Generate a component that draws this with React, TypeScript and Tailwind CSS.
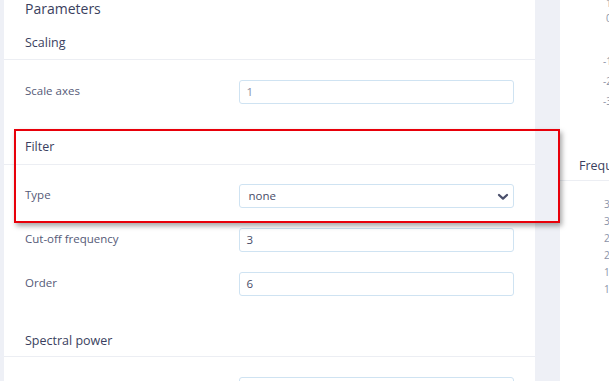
import React from "react";

const font = { fontFamily: '"Open Sans", "Noto Sans", "Liberation Sans", sans-serif' };

interface FieldProps {
  label: string;
  value: string;
  muted?: boolean;
}

// 一行：标签 + 输入框
function Field({ label, value, muted }: FieldProps) {
  return (
    <div className="flex items-start">
      <div className="w-[214px] pt-[3px] text-[11.5px] leading-[16px] text-[#555a77]">{label}</div>
      <div
        className={`flex h-[24px] w-[276px] items-center rounded-[3px] border border-[#cfe3f2] bg-white pl-[7px] text-[11.5px] ${
          muted ? "text-[#8a8ea2]" : "text-[#484c68]"
        }`}
      >
        {value}
      </div>
    </div>
  );
}

function SelectField({ label, value }: { label: string; value: string }) {
  return (
    <div className="flex items-start">
      <div className="w-[214px] pt-[3px] text-[11.5px] leading-[16px] text-[#555a77]">{label}</div>
      <div className="flex h-[24px] w-[276px] items-center justify-between rounded-[3px] border border-[#cfe3f2] bg-white pl-[9px] pr-[4px] text-[11.5px] text-[#484c68]">
        <span>{value}</span>
        <svg width="12" height="8" viewBox="0 0 12 8" className="mt-px">
          <polyline points="2,2 6,5.6 10,2" fill="none" stroke="#4a4f6b" strokeWidth="2.3" strokeLinecap="round" strokeLinejoin="round" />
        </svg>
      </div>
    </div>
  );
}

// 分组标题，底部带分隔线
function SectionHeader({ title, className }: { title: string; className: string }) {
  return (
    <div className={`flex items-end border-b border-[#eceef3] px-[21px] ${className}`}>
      <span className="text-[12.5px] font-medium leading-[16px] text-[#3b3f60]">{title}</span>
    </div>
  );
}

export default function App() {
  const yValues = ["3", "3", "2", "2", "1", "1"];

  return (
    <div className="relative flex h-[381px] w-[609px] overflow-hidden bg-[#eef0f6] pl-[4px]" style={font}>
      {/* 参数面板 */}
      <div className="w-[531px] shrink-0 bg-white">
        <div className="h-[19px] px-[21px] text-[14px] leading-[18px] text-[#3b3f5e]">Parameters</div>

        <SectionHeader title="Scaling" className="h-[41px] pb-[8px]" />
        <div className="px-[21px] pt-[20px]">
          <Field label="Scale axes" value="1" muted />
        </div>

        <SectionHeader title="Filter" className="h-[61px] pb-[9px]" />
        <div className="flex flex-col gap-[20px] px-[21px] pt-[19px]">
          <SelectField label="Type" value="none" />
          <Field label="Cut-off frequency" value="3" />
          <Field label="Order" value="6" />
        </div>

        <SectionHeader title="Spectral power" className="h-[61px] pb-[7px]" />
        <div className="px-[21px] pt-[20px]">
          <Field label="" value="" />
        </div>
      </div>

      <div className="w-[25px] shrink-0" />

      {/* 右侧图表面板 */}
      <div className="flex-1 bg-white">
        <div className="relative h-[150px] text-[10px] leading-[12px] text-[#8a93a8]">
          <span className="absolute left-[46px] top-[-3px]">1</span>
          <span className="absolute left-[46px] top-[12px]">0</span>
          <span className="absolute left-[43px] top-[55px]">-1</span>
          <span className="absolute left-[43px] top-[75px]">-2</span>
          <span className="absolute left-[43px] top-[95px]">-3</span>
        </div>
        <div className="flex h-[31px] items-end border-b border-[#eceef3] pb-[6px] pl-[19px]">
          <span className="whitespace-nowrap text-[12.5px] font-medium leading-[16px] text-[#3b3f60]">Frequency</span>
        </div>
        <div className="flex flex-col pl-[44px] pt-[15px] text-[10px] leading-[17px] text-[#8a93a8]">
          {yValues.map((v, i) => (
            <span key={i}>{v}</span>
          ))}
        </div>
      </div>

      {/* 红色高亮框 */}
      <div className="pointer-events-none absolute left-[14px] top-[129px] h-[94px] w-[546px] border-2 border-[#e8000a] shadow-[2px_3px_5px_rgba(0,0,0,0.35)]" />
    </div>
  );
}
